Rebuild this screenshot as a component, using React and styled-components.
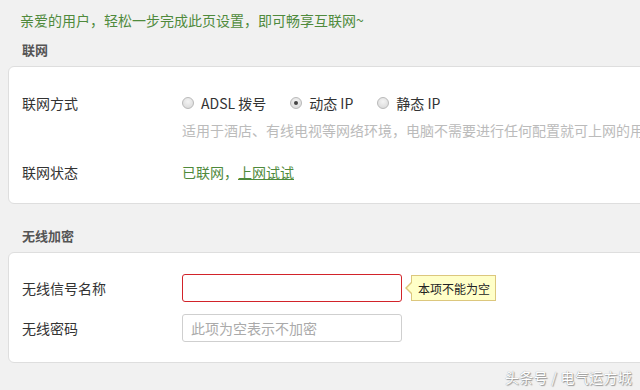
import styled, { createGlobalStyle } from "styled-components";

const GlobalStyle = createGlobalStyle`
    html, body {
        margin: 0;
        padding: 0;
        background: #f1f1f1;
        overflow: hidden;
    }
    body {
        font-family: "Noto Sans CJK SC", "Noto Sans", sans-serif;
        font-size: 14px;
        color: #333;
    }
`;

const Page = styled.div`
    position: relative;
    width: 640px;
    height: 390px;
    padding-top: 10px;
    box-sizing: border-box;
`;

const Welcome = styled.div`
    padding-left: 20px;
    line-height: 20px;
    color: #4f8a3c;
`;

const SectionTitle = styled.div`
    padding-left: 22px;
    margin-top: ${p => p.$top || 10}px;
    line-height: 20px;
    font-size: 13px;
    font-weight: bold;
    color: #555;
`;

const Card = styled.div`
    margin: 6px 0 0 8px;
    width: 700px;
    box-sizing: border-box;
    background: #fff;
    border: 1px solid #dedede;
    border-radius: 6px;
    padding: ${p => p.$pad};
    display: flex;
    flex-direction: column;
    gap: ${p => p.$gap}px;
`;

const Row = styled.div`
    display: flex;
    align-items: ${p => (p.$top ? "flex-start" : "center")};
`;

const Label = styled.div`
    width: 160px;
    flex-shrink: 0;
    line-height: 20px;
    color: #333;
`;

const Control = styled.div`
    display: flex;
    flex-direction: column;
    gap: 7px;
    white-space: nowrap;
`;

const RadioGroup = styled.div`
    display: flex;
    align-items: center;
    line-height: 20px;
`;

const RadioItem = styled.label`
    display: flex;
    align-items: center;
    gap: 7px;
    margin-right: 24px;
    color: #333;
`;

const RadioDot = styled.span`
    width: 10px;
    height: 10px;
    border-radius: 50%;
    border: 1px solid #b9b9b9;
    background: radial-gradient(circle at 50% 35%, #f4f4f4 0%, #d6d6d6 100%);
    position: relative;
    flex-shrink: 0;

    &::after {
        content: "";
        display: ${p => (p.$checked ? "block" : "none")};
        position: absolute;
        left: 3px;
        top: 3px;
        width: 4px;
        height: 4px;
        border-radius: 50%;
        background: #444;
    }
`;

const Hint = styled.div`
    line-height: 20px;
    color: #bbb;
`;

const Status = styled.div`
    line-height: 20px;
    color: #4f8a3c;

    a {
        color: #4f8a3c;
        text-decoration: underline;
    }
`;

const Field = styled.div`
    position: relative;
    display: flex;
    align-items: center;
`;

const Input = styled.input`
    width: 220px;
    height: 28px;
    box-sizing: border-box;
    border: 1px solid ${p => (p.$error ? "#d2232a" : "#cfcfcf")};
    border-radius: 3px;
    padding: 0 8px;
    font-family: inherit;
    font-size: 14px;
    color: #333;
    outline: none;
    background: #fff;

    &::placeholder {
        color: #aaa;
    }
`;

const Tip = styled.div`
    position: relative;
    margin-left: 9px;
    height: 26px;
    box-sizing: border-box;
    padding: 0 5px 0 6px;
    display: flex;
    align-items: center;
    background: #ffffc8;
    border: 1px solid #dcc77d;
    font-size: 12px;
    color: #222;

    &::before, &::after {
        content: "";
        position: absolute;
        top: 50%;
        transform: translateY(-50%);
        border-style: solid;
    }
    &::before {
        left: -7px;
        border-width: 7px 7px 7px 0;
        border-color: transparent #dcc77d transparent transparent;
    }
    &::after {
        left: -5px;
        border-width: 6px 6px 6px 0;
        border-color: transparent #ffffc8 transparent transparent;
    }
`;

const Watermark = styled.div`
    position: absolute;
    right: 8px;
    bottom: 3px;
    font-size: 14px;
    color: #fff;
    text-shadow: 0 0 1px #888, 1px 1px 1px #999;
    letter-spacing: 0.3px;
`;

const radios = [
    { label: "ADSL 拨号", checked: false },
    { label: "动态 IP", checked: true },
    { label: "静态 IP", checked: false },
];

export default function App() {
    return (
        <>
            <GlobalStyle />
            <Page>
                <Welcome>亲爱的用户，轻松一步完成此页设置，即可畅享互联网~</Welcome>
                <SectionTitle $top={10}>联网</SectionTitle>
                <Card $pad="26px 13px 21px" $gap={22}>
                    <Row $top>
                        <Label>联网方式</Label>
                        <Control>
                            <RadioGroup>
                                {radios.map(r => (
                                    <RadioItem key={r.label}>
                                        <RadioDot $checked={r.checked} />
                                        {r.label}
                                    </RadioItem>
                                ))}
                            </RadioGroup>
                            <Hint>适用于酒店、有线电视等网络环境，电脑不需要进行任何配置就可上网的用户</Hint>
                        </Control>
                    </Row>
                    <Row>
                        <Label>联网状态</Label>
                        <Status>已联网，<a href="#">上网试试</a></Status>
                    </Row>
                </Card>
                <SectionTitle $top={22}>无线加密</SectionTitle>
                <Card $pad="21px 13px 20px" $gap={12}>
                    <Row>
                        <Label>无线信号名称</Label>
                        <Field>
                            <Input $error />
                            <Tip>本项不能为空</Tip>
                        </Field>
                    </Row>
                    <Row>
                        <Label>无线密码</Label>
                        <Field>
                            <Input placeholder="此项为空表示不加密" />
                        </Field>
                    </Row>
                </Card>
                <Watermark>头条号 / 电气运方城</Watermark>
            </Page>
        </>
    );
}
